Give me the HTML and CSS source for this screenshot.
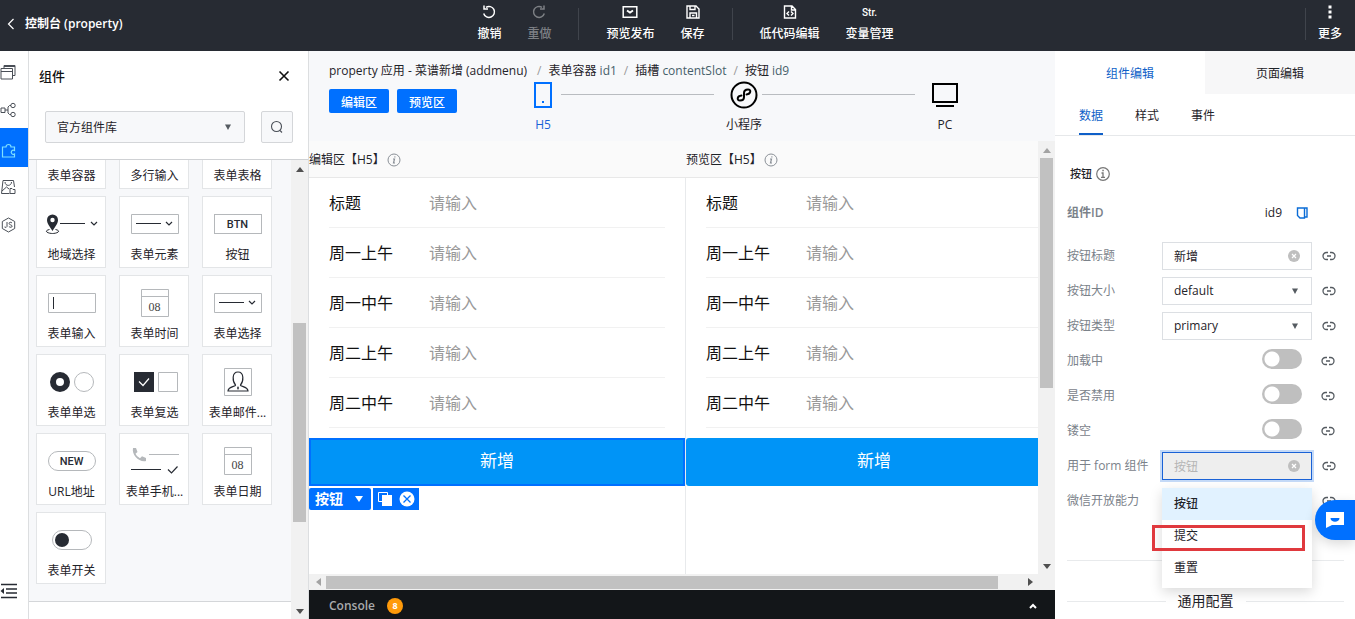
FILE: index.html
```html
<!DOCTYPE html>
<html lang="zh-CN">
<head>
<meta charset="utf-8">
<title>控制台 (property)</title>
<link rel="stylesheet" href="styles.css">
</head>
<body>
<svg class="defs" width="0" height="0" aria-hidden="true">
  <symbol id="link" viewBox="0 0 14 10"><path d="M6 1.500H4.500a3.500 3.500 0 0 0 0 7H6M8 1.500h1.500a3.500 3.500 0 0 1 0 7H8M5 5h4" fill="none" stroke="#555b61" stroke-width="1.300"/></symbol>
  <symbol id="clear" viewBox="0 0 12 12"><circle cx="6" cy="6" r="6" fill="#bfbfbf"/><path d="M4 4l4 4M8 4L4 8" stroke="#fff" stroke-width="1.200"/></symbol>
  <symbol id="down" viewBox="0 0 6 6"><path d="M0 0.500h6L3 6z" fill="#555b61"/></symbol>
  <symbol id="calendar" viewBox="0 0 28 28"><path d="M.5.5h27v27H.5zM.5 7.500h27" fill="#fff" stroke="#b5b8bb"/></symbol>
  <symbol id="dropdown" viewBox="0 0 48 20"><path d="M.5.5h47v19H.5z" fill="#fff" stroke="#b5b8bb"/><path d="M5 9.500h25" stroke="#272b33"/><path d="M35 8l3 3 3-3" fill="none" stroke="#272b33" stroke-width="1.200"/></symbol>
  <symbol id="info" viewBox="0 0 14 14"><circle cx="7" cy="7" r="6" fill="none" stroke="#8a9097"/><path d="M8 3.300l-.2 1.200M6 6h1.500l-1 4h1.500" fill="none" stroke="#8a9097" stroke-width="1.200"/></symbol>
</svg>

<header class="topbar">
  <a class="back" href="#"><svg width="8" height="12" viewBox="0 0 8 12"><path d="M6.500 1L1.500 6l5 5" fill="none" stroke="#fff" stroke-width="1.200"/></svg><span>控制台 (property)</span></a>
  <nav class="tools">
    <button class="tool"><svg width="16" height="16" viewBox="0 0 16 16"><path d="M5 3.300A5.500 5.500 0 1 1 2.700 9.500M3 1.500v3.500h4" fill="none" stroke="#fff" stroke-width="1.500"/></svg>撤销</button>
    <button class="tool off"><svg width="16" height="16" viewBox="0 0 16 16"><path d="M11 3.300A5.500 5.500 0 1 0 13.300 9.500M13 1.500v3.500H9" fill="none" stroke="#7d8085" stroke-width="1.500"/></svg>重做</button>
    <span class="sep"></span>
    <button class="tool"><svg width="16" height="16" viewBox="0 0 16 16"><path d="M1.200 2.700h13.600v10.600H1.200z" fill="none" stroke="#fff" stroke-width="1.500"/><path d="M5 6.500l3 2 3-2" fill="none" stroke="#fff" stroke-width="1.900"/></svg>预览发布</button>
    <button class="tool"><svg width="16" height="16" viewBox="0 0 16 16"><path d="M2 2h9l3 3v9H2zM5 2v3.500h5V2M5 14V9h6.500v5M7 11.500h2.500" fill="none" stroke="#fff" stroke-width="1.400"/></svg>保存</button>
    <span class="sep"></span>
    <button class="tool"><svg width="16" height="16" viewBox="0 0 16 16"><path d="M2.500 2h7.500l3.500 3.500V14h-11zM9.500 2v4h4" fill="none" stroke="#fff" stroke-width="1.400"/><path d="M7 7.500L5 9.500l2 2M9 7.500l2 2-2 2" fill="none" stroke="#fff" stroke-width="1.400"/></svg>低代码编辑</button>
    <button class="tool"><span class="str">Str.</span>变量管理</button>
  </nav>
  <div class="more">
    <span class="sep"></span>
    <button class="tool"><svg width="16" height="16" viewBox="0 0 16 16"><path d="M6.500 1.500h3v3h-3zM6.500 6.500h3v3h-3zM6.500 11.500h3v3h-3z" fill="#fff"/></svg>更多</button>
  </div>
</header>

<main class="main">
  <nav class="rail">
    <button class="rail-item" aria-label="页面"><svg width="16" height="16" viewBox="0 0 16 16"><path d="M1 4.500h11.500V15H1zM1 7.500h11.500M4 4.500v-3h11v10h-2.500M4 2.500h11" fill="none" stroke="#4a4f57"/></svg></button>
    <button class="rail-item" aria-label="流程"><svg width="16" height="16" viewBox="0 0 16 16"><path d="M1 6h4v4.500H1zM5 8h3M11 3.500H9.500L8 5v6l1.500 1.500H11" fill="none" stroke="#4a4f57"/><circle cx="13" cy="3.500" r="2.200" fill="none" stroke="#4a4f57"/><circle cx="13" cy="12.500" r="2.200" fill="none" stroke="#4a4f57"/></svg></button>
    <button class="rail-item on" aria-label="组件"><svg width="16" height="16" viewBox="0 0 16 16"><path d="M2.500 15V5H6a2.500 2.500 0 1 1 5 0h3.500v3.500a2.100 2.100 0 1 0 0 3.500v3z" fill="none" stroke="#7fe0ff" stroke-width="1.200"/></svg></button>
    <button class="rail-item" aria-label="素材"><svg width="16" height="16" viewBox="0 0 16 16"><path d="M9.500 14.500H1.500L3 1.500h10.500l1 6.500M5 3c0 4.500 6.500 4.500 6.500 0M2 12l4.500-4 2.500 2M10 9.500h2l1 1h2v4h-5z" fill="none" stroke="#4a4f57"/></svg></button>
    <button class="rail-item" aria-label="JS"><svg width="16" height="16" viewBox="0 0 16 16"><path d="M8.500 1l6.200 3.500v7L8.500 15l-6.200-3.500v-7z" fill="none" stroke="#4a4f57"/><path d="M7 5v4.500q-.5 1.500-2.500.5M12 6c-1-1.200-3-.9-2.900.5 0 1.700 3 1 3 2.700 0 1.400-2.200 1.400-3.200.3" fill="none" stroke="#4a4f57"/></svg></button>
    <button class="rail-item fold" aria-label="收起"><svg width="18" height="16" viewBox="0 0 18 16"><path d="M1 1.500h16M6 6h11M6 10h11M1 14.500h16" stroke="#272b33" stroke-width="1.600"/><path d="M4 5v6L.5 8z" fill="#272b33"/></svg></button>
  </nav>

  <aside class="panel">
    <div class="panel-head">
      <h2>组件</h2>
      <button class="plain" aria-label="关闭"><svg width="12" height="12" viewBox="0 0 12 12"><path d="M1.500 1.500l9 9M10.500 1.500l-9 9" stroke="#111" stroke-width="1.600"/></svg></button>
    </div>
    <div class="panel-filter">
      <div class="pick"><select aria-label="组件库"><option>官方组件库</option></select><svg width="6" height="6"><use href="#down"/></svg></div>
      <button class="search" aria-label="搜索"><svg width="14" height="14" viewBox="0 0 14 14"><circle cx="6.500" cy="6.500" r="5" fill="none" stroke="#4a4f57" stroke-width="1.100"/><path d="M10 10.500l2 2" stroke="#4a4f57" stroke-width="1.100"/></svg></button>
    </div>
    <div class="panel-body">
      <div class="lib">
        <div class="cards">
          <button class="card cut">表单容器</button>
          <button class="card cut">多行输入</button>
          <button class="card cut">表单表格</button>

          <button class="card"><svg width="54" height="28" viewBox="0 0 54 28"><path d="M7.500 21C4.500 16 2 13.500 2 10a5.500 5.500 0 0 1 11 0c0 3.500-2.500 6-5.500 11z" fill="#272b33"/><circle cx="7.500" cy="10" r="2.200" fill="#fff"/><path d="M4.500 19.500C-2 21 3 23.500 7.500 23.500s9.500-2.500 3-4" fill="none" stroke="#272b33"/><path d="M15 13.500h25" stroke="#272b33"/><path d="M46 12l3 3 3-3" fill="none" stroke="#272b33" stroke-width="1.200"/></svg><span>地域选择</span></button>
          <button class="card"><svg width="48" height="20"><use href="#dropdown"/></svg><span>表单元素</span></button>
          <button class="card"><span class="pic box">BTN</span><span>按钮</span></button>

          <button class="card"><svg width="48" height="20" viewBox="0 0 48 20"><path d="M.5.5h47v19H.5z" fill="#fff" stroke="#b5b8bb"/><path d="M5.500 4v12" stroke="#272b33"/></svg><span>表单输入</span></button>
          <button class="card"><span class="pic day"><svg width="28" height="28"><use href="#calendar"/></svg><span>08</span></span><span>表单时间</span></button>
          <button class="card"><svg width="48" height="20"><use href="#dropdown"/></svg><span>表单选择</span></button>

          <button class="card"><svg width="46" height="20" viewBox="0 0 46 20"><circle cx="11" cy="10" r="7" fill="#fff" stroke="#272b33" stroke-width="6"/><circle cx="35" cy="10" r="9.500" fill="#fff" stroke="#b5b8bb"/></svg><span>表单单选</span></button>
          <button class="card"><svg width="46" height="20" viewBox="0 0 46 20"><path d="M2 0h20v20H2z" fill="#272b33"/><path d="M7 9.500l4 4 6-7" fill="none" stroke="#fff" stroke-width="1.200"/><path d="M26.500.5h19v19h-19z" fill="#fff" stroke="#b5b8bb"/></svg><span>表单复选</span></button>
          <button class="card"><svg width="28" height="28" viewBox="0 0 28 28"><path d="M.5.5h27v27H.5z" fill="#fff" stroke="#b5b8bb"/><path d="M11.500 17c-3-3.500-4-13 2.500-13s5.500 9.500 2.500 13c-.8 1.500 7.500 1.500 7.500 6H4c0-4.500 8.300-4.500 7.500-6z" fill="none" stroke="#272b33" stroke-width="1.200"/><path d="M14 18l1 2-1 2-1-2z" fill="#272b33"/></svg><span>表单邮件...</span></button>

          <button class="card"><span class="pic box round">NEW</span><span>URL地址</span></button>
          <button class="card"><svg width="48" height="28" viewBox="0 0 48 28"><path d="M2 1h3l1.500 4-2 1.700q1.300 3.200 4.500 4.500l2-2L15 11v3C8 15.500.5 8 2 1z" fill="#b5b8bb"/><path d="M18 7.500h30" stroke="#b5b8bb"/><path d="M0 22.500h30" stroke="#272b33"/><path d="M37 22.500l3.500 3.500 6-6.500" fill="none" stroke="#272b33" stroke-width="1.200"/></svg><span>表单手机...</span></button>
          <button class="card"><span class="pic day"><svg width="28" height="28"><use href="#calendar"/></svg><span>08</span></span><span>表单日期</span></button>

          <button class="card"><svg width="40" height="20" viewBox="0 0 40 20"><rect x=".5" y=".5" width="39" height="19" rx="9.500" fill="#fff" stroke="#b5b8bb"/><circle cx="10" cy="10" r="7" fill="#272b33"/></svg><span>表单开关</span></button>
        </div>
      </div>
      <div class="vbar">
        <svg width="8" height="5" viewBox="0 0 8 5"><path d="M0 5h8L4 0z" fill="#505050"/></svg>
        <div class="track"><div class="before"></div><div class="thumb"></div><div class="after"></div></div>
        <svg width="8" height="5" viewBox="0 0 8 5"><path d="M0 0h8L4 5z" fill="#505050"/></svg>
      </div>
    </div>
  </aside>

  <section class="work">
    <div class="work-head">
      <nav class="crumbs"><span>property 应用 - 菜谱新增 (addmenu)</span><i>/</i><a href="#">表单容器 <em>id1</em></a><i>/</i><a href="#">插槽 <em>contentSlot</em></a><i>/</i><a href="#">按钮 <em>id9</em></a></nav>
      <div class="modes">
        <div class="zones"><button class="zone">编辑区</button><button class="zone">预览区</button></div>
        <div class="devices">
          <button class="device on"><svg width="28" height="28" viewBox="0 0 28 28"><path d="M6 2h16v24H6z" fill="none" stroke="#0070ff" stroke-width="2"/><path d="M13 20h2v2h-2z" fill="#0070ff"/></svg>H5</button>
          <span class="rule"></span>
          <button class="device"><svg width="28" height="28" viewBox="0 0 28 28"><circle cx="14" cy="14" r="12.500" fill="none" stroke="#000" stroke-width="2"/><path d="M11.500 14.500C7 15 6.500 19.500 10 19.500c2.500 0 4-1.500 4-3.500v-4c0-2 1.500-3.500 4-3.500 3.500 0 3 4.500-1.500 5" fill="none" stroke="#000" stroke-width="2" stroke-linecap="round"/></svg>小程序</button>
          <span class="rule"></span>
          <button class="device"><svg width="28" height="28" viewBox="0 0 28 28"><path d="M2 3h24v18H2z" fill="none" stroke="#000" stroke-width="2"/><path d="M5 25h18" stroke="#000" stroke-width="2"/></svg>PC</button>
        </div>
      </div>
    </div>

    <div class="stage">
      <div class="panes">
        <section class="pane">
          <h3>编辑区【H5】<svg width="14" height="14"><use href="#info"/></svg></h3>
          <form class="phone">
            <label class="field"><span>标题</span><input placeholder="请输入"></label>
            <label class="field"><span>周一上午</span><input placeholder="请输入"></label>
            <label class="field"><span>周一中午</span><input placeholder="请输入"></label>
            <label class="field"><span>周二上午</span><input placeholder="请输入"></label>
            <label class="field"><span>周二中午</span><input placeholder="请输入"></label>
            <button type="button" class="add picked">新增</button>
            <div class="handles">
              <button type="button" class="handle name">按钮<svg width="8" height="6" viewBox="0 0 8 6"><path d="M0 0h8L4 6z" fill="#fff"/></svg></button>
              <div class="handle">
                <button type="button" class="plain" aria-label="复制"><svg width="16" height="16" viewBox="0 0 16 16"><path d="M1.500 1.500h9v9h-9z" fill="none" stroke="#fff"/><path d="M5 4h10v11H5z" fill="#fff"/></svg></button>
                <button type="button" class="plain" aria-label="删除"><svg width="16" height="16" viewBox="0 0 16 16"><circle cx="8" cy="8" r="7.500" fill="#fff"/><path d="M4.500 4.500l7 7M11.500 4.500l-7 7" stroke="#0070ff" stroke-width="1.300"/></svg></button>
              </div>
            </div>
          </form>
        </section>
        <section class="pane">
          <h3>预览区【H5】<svg width="14" height="14"><use href="#info"/></svg></h3>
          <form class="phone wide">
            <label class="field"><span>标题</span><input placeholder="请输入"></label>
            <label class="field"><span>周一上午</span><input placeholder="请输入"></label>
            <label class="field"><span>周一中午</span><input placeholder="请输入"></label>
            <label class="field"><span>周二上午</span><input placeholder="请输入"></label>
            <label class="field"><span>周二中午</span><input placeholder="请输入"></label>
            <button type="button" class="add">新增</button>
          </form>
        </section>
      </div>
      <div class="vbar stage-v">
        <svg width="8" height="5" viewBox="0 0 8 5"><path d="M0 5h8L4 0z" fill="#a3a3a3"/></svg>
        <div class="track"><div class="thumb"></div><div class="after"></div></div>
        <svg width="8" height="5" viewBox="0 0 8 5"><path d="M0 0h8L4 5z" fill="#505050"/></svg>
      </div>
    </div>
    <div class="hbar">
      <svg width="5" height="8" viewBox="0 0 5 8"><path d="M5 0v8L0 4z" fill="#a3a3a3"/></svg>
      <div class="track"><div class="thumb"></div><div class="after"></div></div>
      <svg width="5" height="8" viewBox="0 0 5 8"><path d="M0 0v8l5-4z" fill="#505050"/></svg>
    </div>
    <footer class="console"><strong>Console</strong><span class="count">8</span><button class="plain" aria-label="展开"><svg width="8" height="6" viewBox="0 0 8 6"><path d="M1 5l3-3 3 3" fill="none" stroke="#fff" stroke-width="2"/></svg></button></footer>
  </section>

  <aside class="props">
    <div class="tabs"><button class="tab on">组件编辑</button><button class="tab">页面编辑</button></div>
    <div class="subtabs"><button class="subtab on">数据</button><button class="subtab">样式</button><button class="subtab">事件</button></div>
    <div class="form">
      <h3>按钮<svg width="14" height="14" viewBox="0 0 14 14"><circle cx="7" cy="7" r="6.300" fill="none" stroke="#777" stroke-width="1.200"/><path d="M5.500 6H7v4M5 10.300h4M6.300 3.500h1.500" fill="none" stroke="#777" stroke-width="1.300"/></svg></h3>
      <div class="ident"><strong>组件ID</strong><span>id9</span><button class="plain" aria-label="复制ID"><svg width="12" height="12" viewBox="0 0 12 12"><path d="M3.500 1H11v9H9M1.500 1v7.500L4 11h4.500V1z" fill="none" stroke="#0a6cd6" stroke-width="1.400"/></svg></button></div>

      <div class="row"><label for="f1">按钮标题</label><div class="ctl"><input id="f1" value="新增"><svg width="12" height="12"><use href="#clear"/></svg></div><button class="plain" aria-label="绑定"><svg width="14" height="10"><use href="#link"/></svg></button></div>
      <div class="row"><label for="f2">按钮大小</label><div class="ctl"><select id="f2"><option>default</option></select><svg class="caret" width="6" height="6"><use href="#down"/></svg></div><button class="plain" aria-label="绑定"><svg width="14" height="10"><use href="#link"/></svg></button></div>
      <div class="row"><label for="f3">按钮类型</label><div class="ctl"><select id="f3"><option>primary</option></select><svg class="caret" width="6" height="6"><use href="#down"/></svg></div><button class="plain" aria-label="绑定"><svg width="14" height="10"><use href="#link"/></svg></button></div>
      <div class="row"><label for="f4">加载中</label><input class="switch" type="checkbox" id="f4"><button class="plain" aria-label="绑定"><svg width="14" height="10"><use href="#link"/></svg></button></div>
      <div class="row"><label for="f5">是否禁用</label><input class="switch" type="checkbox" id="f5"><button class="plain" aria-label="绑定"><svg width="14" height="10"><use href="#link"/></svg></button></div>
      <div class="row"><label for="f6">镂空</label><input class="switch" type="checkbox" id="f6"><button class="plain" aria-label="绑定"><svg width="14" height="10"><use href="#link"/></svg></button></div>
      <div class="row"><label for="f7">用于 form 组件</label>
        <div class="ctl open"><input id="f7" placeholder="按钮"><svg width="12" height="12"><use href="#clear"/></svg>
          <div class="menu"><button class="opt on">按钮</button><button class="opt">提交</button><button class="opt">重置</button><span class="mark"></span></div>
        </div><button class="plain" aria-label="绑定"><svg width="14" height="10"><use href="#link"/></svg></button></div>
      <div class="row"><span>微信开放能力</span><button class="plain" aria-label="绑定"><svg width="14" height="10"><use href="#link"/></svg></button></div>
      <hr>
      <div class="section"><span>通用配置</span></div>
    </div>
    <button class="chat" aria-label="客服"><svg width="20" height="18" viewBox="0 0 20 18"><path d="M1 1h18v13H7l-6 3z" fill="#fff"/><path d="M5.500 7h9c0 5-9 5-9 0z" fill="#0070ff"/></svg></button>
  </aside>
</main>
</body>
</html>
```

FILE: styles.css
```css
* { box-sizing: border-box; }
body {
  margin: 0;
  height: 100vh;
  display: flex;
  flex-direction: column;
  overflow: hidden;
  font: 12px/18px "Open Sans", "Noto Sans CJK SC", sans-serif;
  color: #1f2329;
  background: #fff;
}
button, input, select { font: inherit; color: inherit; margin: 0; }
button { padding: 0; border: 0; background: none; cursor: pointer; }
a { color: inherit; text-decoration: none; }
svg { display: block; flex: none; }
h2, h3 { margin: 0; }
.defs { position: absolute; }
.plain { flex: none; }

.topbar {
  flex: none;
  display: grid;
  grid-template-columns: 1fr auto 1fr;
  height: 51px;
  background: #272b33;
  color: #fff;
}
.back { display: flex; align-items: center; gap: 10px; padding: 0 0 3px 7px; font-weight: 600; }
.tools { display: flex; gap: 26px; margin-left: 16px; }
.tool { display: flex; flex-direction: column; align-items: center; gap: 5px; padding-top: 4px; font-weight: 500; white-space: nowrap; }
.tool.off { color: #7d8085; }
.str { height: 16px; font: 500 10px/18px Roboto, sans-serif; }
.sep { width: 1px; height: 32px; margin: 8px 1px 0; background: #40444c; }
.more { display: flex; justify-content: flex-end; gap: 11px; padding-right: 13px; }

.main { flex: 1; min-height: 0; display: flex; }
.rail { flex: none; width: 29px; display: flex; flex-direction: column; padding-top: 1px; border-right: 1px solid #dcdee0; }
.rail-item { height: 38px; padding: 2px 0 0; display: flex; align-items: center; }
.rail-item.on { background: #0070ff; height: 39px; padding-top: 4px; }
.fold { margin: auto 0 10px; }

.panel { flex: none; width: 280px; display: flex; flex-direction: column; border-right: 1px solid #dcdee0; }
.panel-head { display: flex; justify-content: space-between; align-items: center; padding: 16px 18px 0 10px; }
.panel-head h2 { font-size: 13px; font-weight: 500; color: #111; }
.panel-filter { display: flex; gap: 16px; padding: 26px 15px 16px 16px; border-bottom: 1px solid #cfd1d4; }
.pick { flex: 1; position: relative; }
.pick select { appearance: none; width: 100%; height: 32px; padding: 2px 11px 0; border: 1px solid #d4d6d9; border-radius: 2px; background: #f7f8fa; outline: 0; }
.pick svg { position: absolute; right: 14px; top: 13px; }
.search { width: 32px; height: 32px; display: grid; place-items: center; border: 1px solid #d4d6d9; border-radius: 2px; background: #f7f8fa; }
.panel-body { flex: 1; min-height: 0; display: flex; }
.lib { flex: 1; overflow: hidden; }
.cards { display: grid; grid-template-columns: repeat(3, 70px); gap: 7px 13px; padding: 0 0 17px 7px; background: #f7f8fa; border-bottom: 1px solid #d4d6d9; }
.card { height: 72px; display: flex; flex-direction: column; align-items: center; justify-content: space-between; padding: 5px 0 3px 1px; border: 1px solid #e3e5e7; background: #fff; white-space: nowrap; }
.card > :first-child { margin: auto; }
.card.cut { height: 29px; border-top: 0; padding: 4px 0 0 1px; justify-content: center; }
.pic { display: block; }
.box { width: 48px; height: 20px; border: 1px solid #b5b8bb; font: 500 11px/19px Roboto, sans-serif; color: #272b33; text-align: center; }
.round { border-radius: 10px; }
.day { position: relative; }
.day span { position: absolute; left: 0; right: 0; top: 9px; text-align: center; font: 12px/18px "Liberation Serif", serif; color: #444; }

.vbar { flex: none; width: 17px; display: flex; flex-direction: column; align-items: center; gap: 5px; padding: 7px 0 5px; background: #f1f1f1; }
.vbar .track { flex: 1; display: flex; flex-direction: column; }
.vbar .thumb { width: 13px; flex: 198; background: #c1c1c1; }
.vbar .before { flex: 146; }
.vbar .after { flex: 82; }
.stage-v .thumb { flex: 231; }
.stage-v .after { flex: 171; }

.work { flex: 1; min-width: 0; display: flex; flex-direction: column; background: #f7f8fa; }
.work-head { flex: none; height: 90px; padding: 11px 0 0 20px; }
.crumbs { display: flex; gap: 7px; white-space: nowrap; }
.crumbs span { margin-right: 3px; }
.crumbs i { color: #999; font-style: normal; }
.crumbs em { font-style: normal; color: #46606a; }
.modes { display: flex; }
.zones { display: flex; gap: 8px; padding-top: 9px; align-items: flex-start; }
.zone { width: 60px; height: 24px; padding-top: 3px; border-radius: 2px; background: #0070ff; color: #fff; font-weight: 500; }
.devices { flex: 1; display: flex; margin: 1px 92px 0 68px; }
.device { width: 36px; display: flex; flex-direction: column; align-items: center; gap: 7px; white-space: nowrap; }
.device.on { color: #1a62d6; }
.rule { flex: 1; height: 1px; margin: 13px 12px 0 0; background: #b9bcc0; }

.stage { flex: 1; min-height: 0; display: flex; }
.panes { flex: 1; display: flex; overflow: hidden; }
.pane { flex: 0 0 377px; display: flex; flex-direction: column; background: #fff; }
.pane h3 { display: flex; align-items: center; gap: 2px; height: 37px; padding-top: 1px; font-size: 12px; font-weight: 400; background: #fafafa; border-bottom: 1px solid #e8e8e8; }
.phone { flex: 1; border-right: 1px solid #e8eaec; }
.field { display: flex; align-items: center; height: 50px; margin: 0 20px; border-bottom: 1px solid #f1f1f1; font-size: 16px; color: #111; }
.field span { width: 100px; }
.field input { flex: 1; min-width: 0; padding: 0; border: 0; outline: 0; background: none; }
.field input::placeholder { color: #999; opacity: 1; }
.wide .field { margin-right: 0; }
.add { display: block; width: 100%; height: 48px; margin-top: 10px; padding-bottom: 2px; border-radius: 3px; background: #0094f7; color: #fff; font-size: 17px; }
.add.picked { border: 2px solid #0070ff; border-radius: 0; }
.handles { display: flex; gap: 2px; margin-top: 2px; }
.handle { display: flex; align-items: center; gap: 6px; height: 22px; padding: 0 4px; background: #0070ff; color: #fff; }
.name { gap: 12px; padding: 0 8px 0 6px; border-radius: 2px; font-size: 14px; font-weight: 700; }

.hbar { flex: none; display: flex; align-items: center; gap: 4px; height: 16px; padding: 0 22px 0 7px; background: #f1f1f1; }
.hbar .track { flex: 1; display: flex; }
.hbar .thumb { flex: 672; height: 13px; margin-left: 1px; background: #c1c1c1; }
.hbar .after { flex: 26; }
.console { flex: none; height: 29px; display: flex; align-items: center; gap: 12px; padding: 2px 18px 0 20px; background: #131619; color: #a9abad; }
.console strong { font-weight: 600; }
.count { width: 16px; height: 16px; border-radius: 50%; background: #ff9a0a; color: #fff; font: 700 9px/16px "Open Sans", sans-serif; text-align: center; }
.console button { margin-left: auto; }

.props { flex: none; width: 300px; position: relative; overflow: hidden; background: #fff; }
.tabs { display: grid; grid-template-columns: 1fr 1fr; height: 43px; }
.tab { padding-top: 2px; background: #f7f7f8; }
.tab.on { background: #fff; color: #0f5fc8; }
.subtabs { display: flex; gap: 32px; height: 42px; padding-left: 24px; border-bottom: 1px solid #e6e8ea; }
.subtab { padding-top: 2px; }
.subtab.on { color: #0f5fc8; box-shadow: inset 0 -2px #0f5fc8; }
.form { padding: 29px 11px 0 12px; }
.form h3 { display: flex; align-items: center; gap: 4px; padding-left: 3px; font-size: 11px; font-weight: 500; }
.ident { display: flex; align-items: center; height: 18px; margin: 21px 36px 16px 0; }
.ident strong { margin-right: auto; font-weight: 600; color: #7b828a; }
.ident button { margin-left: 14px; }
.row { display: flex; align-items: center; justify-content: space-between; height: 35px; padding-right: 8px; color: #7b828a; }
.row > :first-child { flex: 1; }
.row > .plain { margin-left: 10px; }
.row > span + .plain { margin-left: 0; }
.ctl { position: relative; width: 150px; color: #1f2329; }
.ctl input, .ctl select { display: block; appearance: none; width: 100%; height: 28px; padding: 1px 11px 0; border: 1px solid #dcdfe3; border-radius: 0; background: #fff; outline: 0; }
.ctl > svg { position: absolute; right: 12px; top: 8px; }
.ctl > .caret { right: 14px; top: 11px; }
.open input { background: #eee; border-color: #1a62d6; box-shadow: 0 0 0 2px #c5daf7; }
.open input::placeholder { color: #b5b5b5; opacity: 1; }
.switch { appearance: none; width: 40px; height: 20px; border-radius: 10px; background: radial-gradient(circle at 10px 10px, #fff 7px, #bfbfbf 8px); }
.row .switch { margin-bottom: 3px; }
.row .switch + .plain { margin-left: 19px; margin-right: 1px; }
.menu { position: absolute; z-index: 2; left: 0; right: 0; top: 36px; padding-bottom: 4px; background: #fff; box-shadow: 0 4px 12px rgba(0, 0, 0, 0.15); }
.opt { display: block; width: 100%; height: 32px; padding: 1px 0 0 12px; text-align: left; }
.opt.on { background: #e1f2ff; font-weight: 500; }
.mark { position: absolute; left: -10px; right: 7px; top: 37px; height: 26px; border: 3px solid #e0393e; pointer-events: none; }
.form hr { margin: 42px 0 31px; border: 0; border-top: 1px solid #e8eaec; }
.section { display: flex; align-items: center; gap: 12px; font-size: 14px; }
.section::before, .section::after { content: ""; flex: 1; height: 1px; background: #e8eaec; }
.chat { position: absolute; z-index: 3; right: 0; bottom: 79px; width: 40px; height: 40px; display: grid; place-items: center; border-radius: 20px 0 0 20px; background: #0070ff; box-shadow: 0 4px 12px rgba(0, 0, 0, 0.15); }
```
